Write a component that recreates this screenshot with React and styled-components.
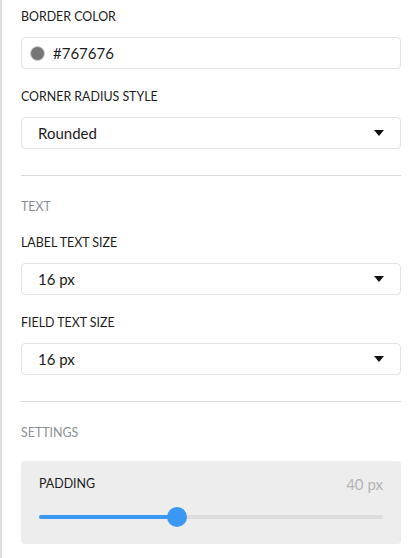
import styled, { createGlobalStyle } from "styled-components";

const Global = createGlobalStyle`
  body {
    margin: 0;
    background: #fff;
    font-family: Lato, "Open Sans", sans-serif;
  }
`;

const fields = [
  { label: "Label text size", value: "16 px" },
  { label: "Field text size", value: "16 px" },
];

const Caret = () => (
  <svg width="10" height="6" viewBox="0 0 10 6">
    <path d="M0 0h10L5 6z" fill="#111" />
  </svg>
);

const App = () => {
  const padding = 40;
  const pct = 40;

  return (
    <Sidebar>
      <Global />
      <Section>
        <Field>
          <Label>Border color</Label>
          <Input>
            <Swatch color="#767676" />
            #767676
          </Input>
        </Field>
        <Field>
          <Label>Corner radius style</Label>
          <Select>
            Rounded
            <Caret />
          </Select>
        </Field>
      </Section>
      <Divider />
      <Section>
        <Heading>Text</Heading>
        {fields.map((f) => (
          <Field key={f.label}>
            <Label>{f.label}</Label>
            <Select>
              {f.value}
              <Caret />
            </Select>
          </Field>
        ))}
      </Section>
      <Divider />
      <Section>
        <Heading>Settings</Heading>
        <SliderCard>
          <SliderHead>
            <Label>Padding</Label>
            <Value>{padding} px</Value>
          </SliderHead>
          <Track>
            <Fill style={{ width: pct + "%" }} />
            <Thumb style={{ left: pct + "%" }} />
          </Track>
        </SliderCard>
      </Section>
    </Sidebar>
  );
};

export default App;

const Sidebar = styled.div`
  width: 420px;
  height: 558px;
  box-sizing: border-box;
  border-left: 2px solid #dedede;
  padding: 9px 19px 0 19px;
  overflow: hidden;
`;

const Section = styled.section`
  display: flex;
  flex-direction: column;
  gap: 20px;
`;

const Field = styled.div`
  display: flex;
  flex-direction: column;
  gap: 12px;
`;

const Label = styled.div`
  font-size: 12.4px;
  line-height: 16px;
  text-transform: uppercase;
  color: #1c1c1c;
`;

const Heading = styled(Label)`
  color: #8b9096;
`;

const Input = styled.div`
  height: 32px;
  box-sizing: border-box;
  border: 1px solid #e3e3e3;
  border-radius: 4px;
  display: flex;
  align-items: center;
  gap: 8px;
  padding: 0 8px;
  font-size: 15px;
  color: #1c1c1c;
`;

const Swatch = styled.span`
  width: 15px;
  height: 15px;
  border-radius: 50%;
  box-sizing: border-box;
  background: ${(p) => p.color};
  border: 1px solid #d4d4d4;
`;

const Select = styled(Input)`
  justify-content: space-between;
  padding: 0 16px;
`;

const Divider = styled.hr`
  border: 0;
  border-top: 1px solid #dadada;
  margin: 26px 0 23px;
`;

const SliderCard = styled.div`
  background: #ededee;
  border-radius: 4px;
  padding: 15px 18px 17px 18px;
  display: flex;
  flex-direction: column;
  gap: 15px;
`;

const SliderHead = styled.div`
  display: flex;
  justify-content: space-between;
  align-items: center;
`;

const Value = styled.span`
  font-size: 15px;
  line-height: 16px;
  color: #b4b4b4;
`;

const Track = styled.div`
  position: relative;
  height: 4px;
  border-radius: 2px;
  background: #dcdcdc;
  margin: 8px 0;
`;

const Fill = styled.div`
  height: 100%;
  border-radius: 2px;
  background: #3b97f3;
`;

const Thumb = styled.div`
  position: absolute;
  top: 50%;
  width: 20px;
  height: 20px;
  border-radius: 50%;
  background: #3b97f3;
  transform: translate(-50%, -50%);
`;
